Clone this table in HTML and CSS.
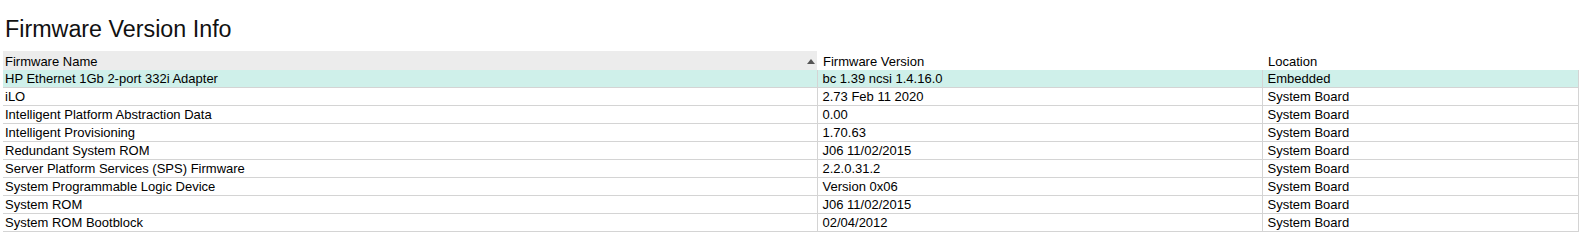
FILE: index.html
```html
<!DOCTYPE html>
<html>
<head>
<meta charset="utf-8">
<link rel="stylesheet" href="styles.css">
</head>
<body>
<h1 class="title">Firmware Version Info</h1>
<table class="fw">
  <colgroup>
    <col class="c1"><col class="c2"><col class="c3">
  </colgroup>
  <thead>
    <tr>
      <th class="sorted"><span>Firmware Name</span><span class="arrow"></span></th>
      <th>Firmware Version</th>
      <th>Location</th>
    </tr>
  </thead>
  <tbody>
    <tr class="sel"><td>HP Ethernet 1Gb 2-port 332i Adapter</td><td>bc 1.39 ncsi 1.4.16.0</td><td>Embedded</td></tr>
    <tr><td>iLO</td><td>2.73 Feb 11 2020</td><td>System Board</td></tr>
    <tr><td>Intelligent Platform Abstraction Data</td><td>0.00</td><td>System Board</td></tr>
    <tr><td>Intelligent Provisioning</td><td>1.70.63</td><td>System Board</td></tr>
    <tr><td>Redundant System ROM</td><td>J06 11/02/2015</td><td>System Board</td></tr>
    <tr><td>Server Platform Services (SPS) Firmware</td><td>2.2.0.31.2</td><td>System Board</td></tr>
    <tr><td>System Programmable Logic Device</td><td>Version 0x06</td><td>System Board</td></tr>
    <tr><td>System ROM</td><td>J06 11/02/2015</td><td>System Board</td></tr>
    <tr><td>System ROM Bootblock</td><td>02/04/2012</td><td>System Board</td></tr>
  </tbody>
</table>
</body>
</html>
```
FILE: styles.css
```css
html, body {
  margin: 0;
  padding: 0;
  background: #ffffff;
}
body {
  font-family: "Liberation Sans", Arial, sans-serif;
  color: #000000;
  padding: 0 6px 0 3px;
}
.title {
  font-size: 23.3px;
  font-weight: normal;
  margin: 0;
  padding: 16px 0 0 2px;
  line-height: 27px;
  height: 35px;
  color: #111111;
}
.fw {
  border-collapse: collapse;
  table-layout: fixed;
  width: 1575px;
  font-size: 13px;
}
.c1 { width: 814px; }
.c2 { width: 445px; }
.c3 { width: 316px; }
.fw th {
  font-weight: normal;
  text-align: left;
  height: 18px;
  padding: 1px 0 0 2px;
  vertical-align: middle;
  line-height: 17px;
  white-space: nowrap;
}
.fw th + th { padding-left: 6px; }
.fw th.sorted {
  background: #ececec;
  position: relative;
}
.arrow {
  position: absolute;
  right: 2px;
  top: 8px;
  width: 0;
  height: 0;
  border-left: 4px solid transparent;
  border-right: 4px solid transparent;
  border-bottom: 5px solid #555555;
}
.fw td {
  height: 16px;
  padding: 1px 0 0 2px;
  line-height: 16px;
  border-bottom: 1px solid #d4d4d4;
  white-space: nowrap;
  overflow: hidden;
}
.fw td + td {
  border-left: 1px solid #d4d4d4;
  padding-left: 5px;
}
.fw td:last-child { border-right: 1px solid #d4d4d4; }
.fw tr.sel td { background: #cff0ea; }
```
